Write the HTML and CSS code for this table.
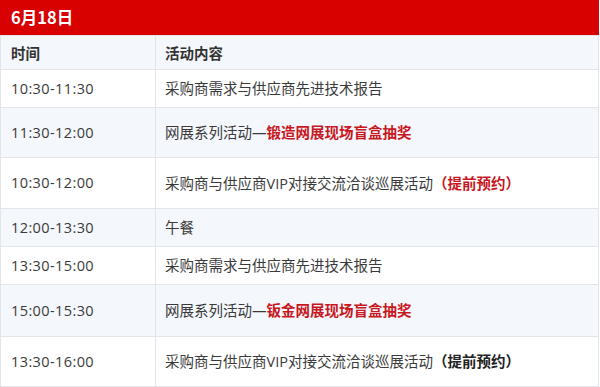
FILE: index.html
```html
<!DOCTYPE html>
<html lang="zh-CN">
<head>
<meta charset="utf-8">
<link rel="stylesheet" href="styles.css">
</head>
<body>
<div class="sched">
  <div class="title">6月18日</div>
  <table class="tbl">
    <colgroup><col class="c1"><col class="c2"></colgroup>
    <tr class="head alt"><th>时间</th><th>活动内容</th></tr>
    <tr class="r38"><td class="time">10:30-11:30</td><td>采购商需求与供应商先进技术报告</td></tr>
    <tr class="r50 alt"><td class="time">11:30-12:00</td><td>网展系列活动—<b class="red">锻造网展现场盲盒抽奖</b></td></tr>
    <tr class="r51"><td class="time">10:30-12:00</td><td>采购商与供应商VIP对接交流洽谈巡展活动<b class="red">（提前预约）</b></td></tr>
    <tr class="r38 alt"><td class="time">12:00-13:30</td><td>午餐</td></tr>
    <tr class="r38"><td class="time">13:30-15:00</td><td>采购商需求与供应商先进技术报告</td></tr>
    <tr class="r52 alt"><td class="time">15:00-15:30</td><td>网展系列活动—<b class="red">钣金网展现场盲盒抽奖</b></td></tr>
    <tr class="r50"><td class="time">13:30-16:00</td><td>采购商与供应商VIP对接交流洽谈巡展活动<b class="dark">（提前预约）</b></td></tr>
  </table>
</div>
</body>
</html>
```
FILE: styles.css
```css
html, body { margin: 0; padding: 0; background: #fff; }
body { font-family: "Open Sans", "Noto Sans CJK SC", sans-serif; color: #3a3a3a; }
.sched { width: 599px; }
.title {
  background: #d90000;
  color: #fff;
  font-weight: bold;
  font-size: 16.5px;
  height: 35px;
  line-height: 35px;
  padding-left: 11px;
  box-sizing: border-box;
  font-family: "Noto Sans CJK SC", sans-serif;
}
.tbl {
  width: 599px;
  border-collapse: collapse;
  font-size: 14.5px;
}
.c1 { width: 155px; }
.tbl td, .tbl th {
  border: 1px solid #e2e5ea;
  padding: 0 0 0 9px;
  text-align: left;
  vertical-align: middle;
  font-weight: normal;
  line-height: 20px;
}
.tbl td.time, .tbl th:first-child { padding-left: 10px; }
.time { letter-spacing: 0.4px; }
.tbl th { font-weight: bold; font-family: "Noto Sans CJK SC", sans-serif; color: #333; }
.head { height: 34px; }
.r38 { height: 38px; }
.r50 { height: 50px; }
.r51 { height: 51px; }
.r52 { height: 52px; }
.alt { background: #f4f7fc; }
.red { color: #c8171e; font-family: "Noto Sans CJK SC", sans-serif; }
.dark { color: #222; font-family: "Noto Sans CJK SC", sans-serif; }
.tbl td:last-child b { font-weight: bold; }
```
